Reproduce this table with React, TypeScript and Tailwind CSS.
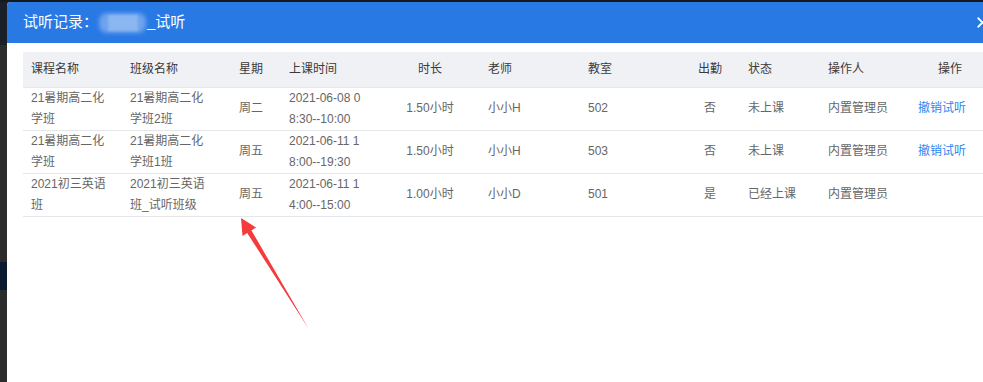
import { X } from 'lucide-react';

type Row = {
  course: string;
  klass: string;
  week: string;
  time: string;
  hours: string;
  teacher: string;
  room: string;
  attend: string;
  status: string;
  operator: string;
  action?: string;
};

const rows: Row[] = [
  {
    course: '21暑期高二化学班',
    klass: '21暑期高二化学班2班',
    week: '周二',
    time: '2021-06-08 08:30--10:00',
    hours: '1.50小时',
    teacher: '小小H',
    room: '502',
    attend: '否',
    status: '未上课',
    operator: '内置管理员',
    action: '撤销试听',
  },
  {
    course: '21暑期高二化学班',
    klass: '21暑期高二化学班1班',
    week: '周五',
    time: '2021-06-11 18:00--19:30',
    hours: '1.50小时',
    teacher: '小小H',
    room: '503',
    attend: '否',
    status: '未上课',
    operator: '内置管理员',
    action: '撤销试听',
  },
  {
    course: '2021初三英语班',
    klass: '2021初三英语班_试听班级',
    week: '周五',
    time: '2021-06-11 14:00--15:00',
    hours: '1.00小时',
    teacher: '小小D',
    room: '501',
    attend: '是',
    status: '已经上课',
    operator: '内置管理员',
  },
];

const widths = [99, 109, 50, 99, 100, 100, 100, 60, 80, 90, 80];

function RedArrow() {
  return (
    <svg className="pointer-events-none absolute left-0 top-0" width="983" height="382">
      <polygon
        points="241,218 242.5,236 247.2,233 308.5,328.5 251.4,230.4 256.1,227.5"
        fill="#f53b3b"
      />
    </svg>
  );
}

export default function App() {
  return (
    <div className="relative h-[382px] w-[983px] overflow-hidden bg-[#2c2c2c] font-['Liberation_Sans','Noto_Sans_CJK_SC',sans-serif]">
      {/* page behind the dialog */}
      <div className="absolute left-0 top-0 h-[45px] w-[7px] bg-[#1b1f27]" />
      <div className="absolute left-0 top-[262px] h-[28px] w-[7px] bg-[#0c1a30]" />
      <div className="absolute left-0 top-0 h-[2px] w-full bg-[#15181d]" />

      {/* dialog */}
      <div className="absolute left-[7px] top-[2px] h-[400px] w-[1000px] overflow-hidden rounded-t-[4px] bg-white">
        <div className="flex h-[41px] items-center bg-[#2879e4] pl-4 text-[15px] text-white">
          <span>试听记录：</span>
          <span className="relative mx-[1px] inline-block h-[20px] w-[47px]">
            <span className="absolute inset-0 rounded-[8px] bg-[#6ea3ee] blur-[2px]" />
            <span className="absolute left-[9px] top-[2px] h-[16px] w-[30px] bg-[#8ab6f2] blur-[1px]" />
          </span>
          <span>_试听</span>
          <X className="ml-auto mr-[16px] h-[17px] w-[17px] text-white" strokeWidth={2.5} />
        </div>

        <div className="px-4 pt-[9px]">
          <table className="table-fixed border-collapse text-[12px]">
            <colgroup>
              {widths.map((w, i) => (
                <col key={i} style={{ width: w }} />
              ))}
            </colgroup>
            <thead>
              <tr className="h-[35px] border-b border-[#e4e6ea] bg-[#f0f1f5] text-left text-[#3a3a3a]">
                <th className="px-2 font-normal">课程名称</th>
                <th className="px-2 font-normal">班级名称</th>
                <th className="px-2 font-normal">星期</th>
                <th className="px-2 font-normal">上课时间</th>
                <th className="px-2 text-center font-normal">时长</th>
                <th className="px-2 font-normal">老师</th>
                <th className="px-2 font-normal">教室</th>
                <th className="px-2 text-center font-normal">出勤</th>
                <th className="px-2 font-normal">状态</th>
                <th className="px-2 font-normal">操作人</th>
                <th className="px-2 text-center font-normal">操作</th>
              </tr>
            </thead>
            <tbody className="text-[#666]">
              {rows.map((r, i) => (
                <tr key={i} className="h-[42px] border-b border-[#e4e6ea] leading-[21px]">
                  <td className="px-2">
                    <div className="w-[80px] break-all">{r.course}</div>
                  </td>
                  <td className="px-2">
                    <div className="w-[80px] break-all">{r.klass}</div>
                  </td>
                  <td className="px-2">{r.week}</td>
                  <td className="px-2">
                    <div className="w-[74px] break-all">{r.time}</div>
                  </td>
                  <td className="px-2 text-center">{r.hours}</td>
                  <td className="px-2">{r.teacher}</td>
                  <td className="px-2">{r.room}</td>
                  <td className="px-2 text-center">{r.attend}</td>
                  <td className="px-2">{r.status}</td>
                  <td className="px-2">{r.operator}</td>
                  <td className="px-2 text-[#2d86ee]">{r.action}</td>
                </tr>
              ))}
            </tbody>
          </table>
        </div>
      </div>

      <RedArrow />
    </div>
  );
}
